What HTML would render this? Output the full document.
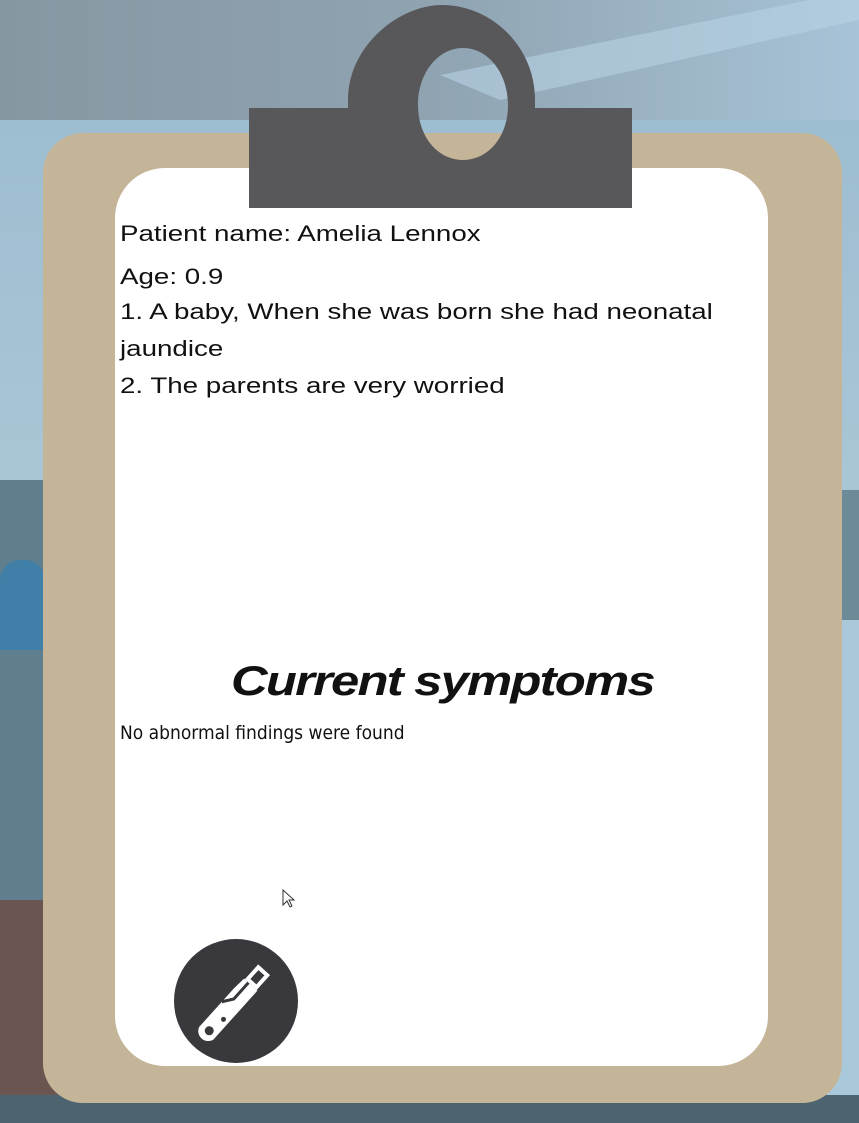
<!DOCTYPE html>
<html><head><meta charset="utf-8"><style>
html,body{margin:0;padding:0}
body{width:859px;height:1123px;position:relative;overflow:hidden;background:#6d8a99;font-family:"Liberation Sans",sans-serif}
.abs{position:absolute}
.t{position:absolute;left:120px;font-size:22px;color:#111;white-space:nowrap;transform:scaleX(1.26);transform-origin:left}
</style></head><body>
<div class="abs" style="left:0;top:0;width:859px;height:120px;background:linear-gradient(90deg,#8797a2 0%,#8fa3b1 50%,#a7c3d7 100%)"></div>
<div class="abs" style="left:0;top:120px;width:859px;height:370px;background:linear-gradient(180deg,#9dbdd1,#a9c6d6)"></div>
<div class="abs" style="left:0;top:480px;width:60px;height:640px;background:#5f7f8f"></div>
<div class="abs" style="left:0;top:560px;width:45px;height:90px;background:#3f7fa8;border-radius:20px 20px 0 0"></div>
<div class="abs" style="left:0;top:900px;width:60px;height:200px;background:#6a5550"></div>
<div class="abs" style="left:820px;top:620px;width:39px;height:500px;background:#a9c8da"></div>
<div class="abs" style="left:0;top:1095px;width:859px;height:28px;background:#4b6470"></div>
<svg class="abs" style="left:0;top:0" width="859" height="1123">
<path d="M440 75 L859 -10 L859 20 L500 100Z" fill="#b7d2e4" opacity=".6"/>
<rect x="43" y="133" width="799" height="970" rx="40" fill="#c4b598"/>
<rect x="115" y="168" width="653" height="898" rx="50" fill="#fff"/>
<path fill-rule="evenodd" fill="#58585a" d="M249 108 H348 V100 C348 45 400 5 442 5 C490 5 535 45 535 100 V108 H632 V208 H249 Z M463 48 C438 48 418 73 418 105 C418 137 438 160 463 160 C488 160 508 137 508 105 C508 73 488 48 463 48 Z"/>
<circle cx="236" cy="1001" r="62" fill="#39383d"/>
<g transform="translate(236 1001) rotate(-48)">
<path d="M-44 -10 H8 L22 -9 V9 H-44 A10 10 0 0 1 -44 -10 Z" fill="#fff"/>
<path d="M-10 -10 L0 -3 L22 -3" fill="none" stroke="#39383d" stroke-width="3"/>
<circle cx="-40" cy="0" r="4.5" fill="#39383d"/>
<circle cx="-22" cy="3" r="2.5" fill="#39383d"/>
<rect x="24" y="-6" width="16" height="12" fill="none" stroke="#fff" stroke-width="4"/>
</g>
</svg>
<div class="t" style="top:221px">Patient name: Amelia Lennox</div>
<div class="t" style="top:264px">Age: 0.9</div>
<div class="t" style="top:299px">1. A baby, When she was born she had neonatal</div>
<div class="t" style="top:336px">jaundice</div>
<div class="t" style="top:373px">2. The parents are very worried</div>
<div class="abs" style="left:231px;top:657px;font-size:42px;font-weight:bold;font-style:italic;letter-spacing:-1.5px;color:#111;white-space:nowrap;transform:scaleX(1.21);transform-origin:left">Current symptoms</div>
<div class="abs" style="left:120px;top:722px;font-size:19px;color:#111;white-space:nowrap;font-family:'DejaVu Sans Condensed','Liberation Sans',sans-serif">No abnormal findings were found</div>
<svg class="abs" style="left:282px;top:889px" width="14" height="20"><path d="M1 1 V16 L5 12 L8 18 L10 17 L7 11 L12 11 Z" fill="#fff" stroke="#333"/></svg>
</body></html>
